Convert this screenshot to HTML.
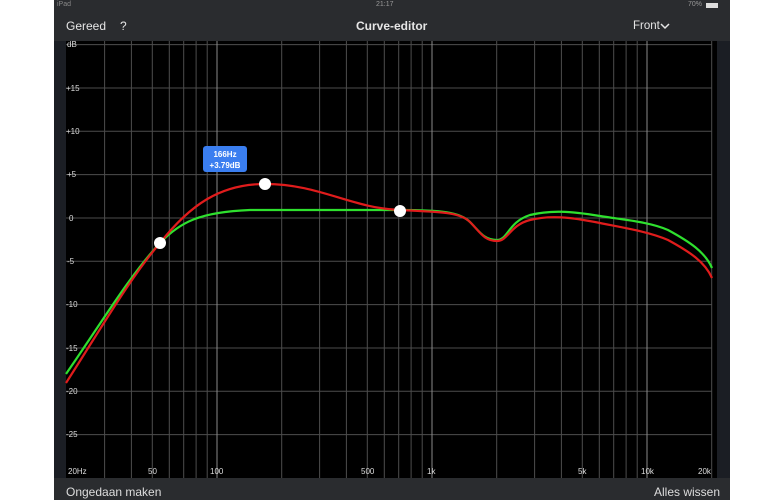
<!DOCTYPE html>
<html><head><meta charset="utf-8"><style>
html,body{margin:0;padding:0;background:#fff;width:770px;height:500px;overflow:hidden;font-family:"Liberation Sans",sans-serif}
#p{position:absolute;left:54px;top:0;width:676px;height:500px;background:#1b1e24}
.nav{position:absolute;left:54px;top:0;width:676px;height:41px;background:#2a2c2f}
.bot{position:absolute;left:54px;top:478px;width:676px;height:22px;background:#2a2c2f}
.t{position:absolute;color:#e6e6e6;white-space:nowrap}
</style></head><body>
<div id="p"></div>
<div class="nav"></div>
<div class="bot"></div>
<div class="t" style="left:57px;top:1px;font-size:7px;color:#888">iPad</div>
<div class="t" style="left:376px;top:1px;font-size:7px;color:#999">21:17</div>
<div class="t" style="left:688px;top:1px;font-size:7px;color:#999">70%</div>
<div style="position:absolute;left:706px;top:3px;width:12px;height:5px;background:#ddd"></div>
<div class="t" style="left:66px;top:19px;font-size:12px">Gereed</div>
<div class="t" style="left:120px;top:19px;font-size:12px">?</div>
<div class="t" style="left:356px;top:19px;font-size:12px;font-weight:bold">Curve-editor</div>
<div class="t" style="left:633px;top:20px;font-size:11.5px">Front</div>
<svg style="position:absolute;left:660px;top:23px" width="10" height="7"><path d="M1 1 L5 5 L9 1" stroke="#e6e6e6" stroke-width="1.5" fill="none"/></svg>
<div class="t" style="left:66px;top:485px;font-size:12px;color:#ddd">Ongedaan maken</div>
<div class="t" style="left:655px;top:485px;font-size:12px;color:#ddd;width:62px;text-align:right;left:654px">Alles wissen</div>
<svg style="position:absolute;left:0;top:0" width="770" height="500">
<rect x="66" y="41" width="651" height="437" fill="#000"/>
<g stroke="#4d4d4d" stroke-width="1">
<path d="M104.6 41V478M131.4 41V478M152.3 41V478M169.3 41V478M183.7 41V478M196.1 41V478M207.2 41V478M281.7 41V478M319.6 41V478M346.4 41V478M367.3 41V478M384.3 41V478M398.7 41V478M411.1 41V478M422.2 41V478M496.7 41V478M534.6 41V478M561.4 41V478M582.3 41V478M599.3 41V478M613.7 41V478M626.1 41V478M637.2 41V478M711.7 41V478"/>
<path d="M66 44.6H712M66 88H712M66 131.3H712M66 174.6H712M66 218H712M66 261.3H712M66 304.6H712M66 348H712M66 391.3H712M66 434.6H712"/>
</g>
<g stroke="#8a8a8a"><path d="M217 41V478M432 41V478M647 41V478"/></g>
<g fill="#ddd" font-size="8" font-family="Liberation Sans">
<text x="67" y="47">dB</text><text x="66" y="91">+15</text><text x="66" y="134">+10</text><text x="67" y="177">+5</text><text x="69" y="221">0</text>
<text x="67" y="264">-5</text><text x="66" y="307">-10</text><text x="66" y="351">-15</text><text x="66" y="394">-20</text><text x="66" y="437">-25</text>
<text x="68" y="474">20Hz</text><text x="148" y="474">50</text><text x="210" y="474">100</text><text x="361" y="474">500</text><text x="427" y="474">1k</text><text x="578" y="474">5k</text><text x="641" y="474">10k</text><text x="698" y="474">20k</text>
</g>
<path d="M66 374 C100 325 130 275 160 243 C180 222 200 212 250 210 L400 210 C440 210 460 212 470 222 C480 232 484 240 497 240 C508 240 508 222 530 215 C550 210 570 211 600 216 C625 220 650 222 668 230 C690 242 705 252 712 268" stroke="#2ee02e" stroke-width="2.2" fill="none"/>
<path d="M66 383 C100 330 130 278 160 243 C190 205 220 184 265 184 C320 184 350 208 400 210 C440 212 460 212 470 222 C480 232 484 241 497 241 C508 241 510 225 530 220 C550 215 570 217 600 223 C625 228 650 232 668 240 C690 252 705 262 712 278" stroke="#e01c1c" stroke-width="2.2" fill="none"/>
<g fill="#fff"><circle cx="160" cy="243" r="6"/><circle cx="265" cy="184" r="6"/><circle cx="400" cy="211" r="6"/></g>
<rect x="203" y="146" width="44" height="26" rx="3" fill="#3a7ef0"/>
<g fill="#fff" font-size="8" font-weight="bold" font-family="Liberation Sans" text-anchor="middle"><text x="225" y="157">166Hz</text><text x="225" y="168">+3.79dB</text></g>
</svg>
</body></html>
